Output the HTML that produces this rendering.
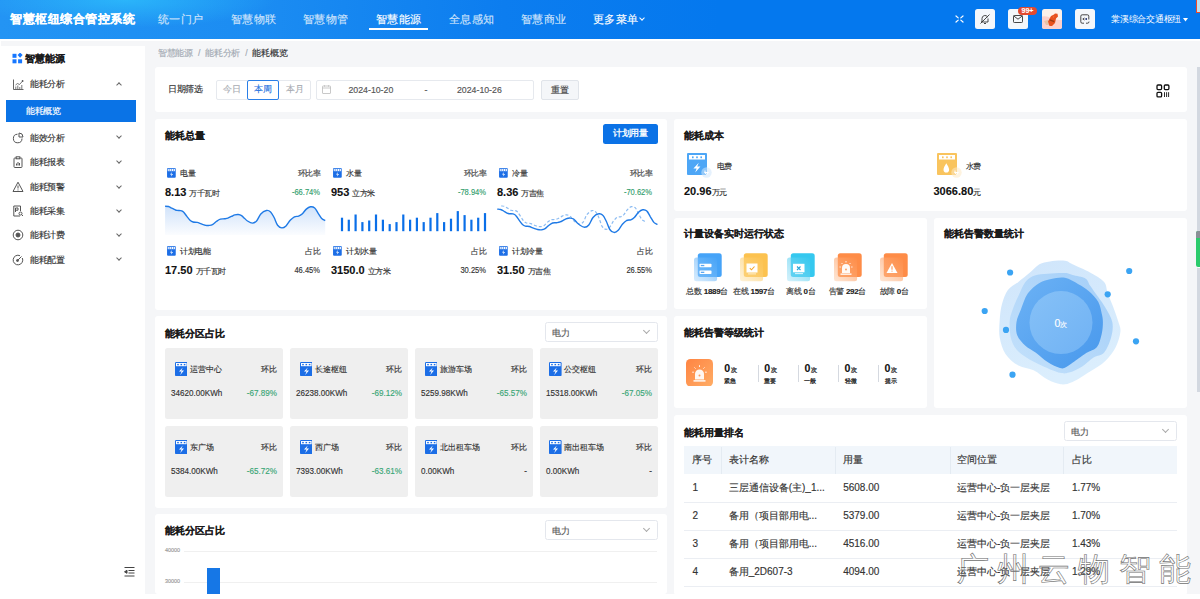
<!DOCTYPE html>
<html><head><meta charset="utf-8">
<style>
*{margin:0;padding:0;box-sizing:border-box}
html,body{width:1200px;height:599px;overflow:hidden;background:#fff;font-family:"Liberation Sans",sans-serif;color:#222}
.a{position:absolute}
.hd{left:0;top:0;width:1200px;height:39px;background:radial-gradient(ellipse 150px 28px at 125px 0px,rgba(50,205,255,0.6),rgba(50,205,255,0) 100%),linear-gradient(90deg,#2394f4 0%,#1b8cf2 22%,#0c7def 42%,#0478ee 60%,#0478ee 100%)}
.title{left:10px;top:10px;font-size:12.45px;letter-spacing:0.5px;font-weight:bold;color:#fff;white-space:nowrap;line-height:18px}
.nav{top:10px;font-size:11.3px;letter-spacing:0.3px;color:#cfe3fb;white-space:nowrap;line-height:18px}
.nav.on{color:#fff}
.card{background:#fff;border-radius:3px}
.ct{font-size:10.6px;font-weight:bold;color:#1a1a1a;white-space:nowrap;line-height:14px}
.side{left:0;top:46px;width:145px;height:548px;background:#fff}
.mi{left:30px;font-size:8.75px;letter-spacing:-0.4px;color:#333;white-space:nowrap;line-height:12px}
.chev{left:116px;width:6px;height:6px;border-right:1px solid #666;border-bottom:1px solid #666;transform:rotate(45deg)}
.t9{font-size:9px;white-space:nowrap;line-height:12px}
.t75{font-size:7.5px;letter-spacing:-0.5px;white-space:nowrap;line-height:11px;color:#333}
.val{font-size:11px;font-weight:bold;color:#111;white-space:nowrap;line-height:14px}
.val span{letter-spacing:-0.5px;font-size:7.5px;font-weight:normal;color:#333}
body *{-webkit-text-stroke:0.15px currentColor}
b,.title,.ct,.val,[style*="font-weight:bold"]{-webkit-text-stroke:0.1px currentColor}
</style></head><body>
<div class="a" style="left:1px;top:41px;width:1199px;height:552.5px;background:#f5f6f8"></div>
<!-- header -->
<div class="a hd"></div>
<div class="a title">智慧枢纽综合管控系统</div>
<div class="a nav" style="left:158px">统一门户</div>
<div class="a nav" style="left:231px">智慧物联</div>
<div class="a nav" style="left:303px">智慧物管</div>
<div class="a nav on" style="left:376px">智慧能源</div>
<div class="a" style="left:369px;top:28px;width:59px;height:1.5px;background:#fff"></div>
<div class="a nav" style="left:449px">全息感知</div>
<div class="a nav" style="left:521px">智慧商业</div>

<!-- sidebar -->
<div class="a side"></div>
<svg class="a" style="left:12px;top:53px" width="11" height="11" viewBox="0 0 11 11"><rect x="0.5" y="0.8" width="4" height="4" fill="#1677ff"/><rect x="6.3" y="0.3" width="3.6" height="3.6" fill="#1677ff" transform="rotate(45 8.1 2.1)"/><rect x="0.5" y="6.3" width="4" height="4" fill="#1677ff"/><rect x="6.1" y="6.3" width="4" height="4" fill="#1677ff"/></svg>
<div class="a" style="left:25px;top:53px;font-size:10px;font-weight:bold;color:#1a1a1a;line-height:12px;white-space:nowrap">智慧能源</div>
<!-- menu icons -->
<svg class="a" style="left:12.5px;top:78.5px" width="11" height="11" viewBox="0 0 11 11" fill="none" stroke="#555" stroke-width="0.9"><path d="M0.5 0.5v10h10"/><path d="M2.8 10V7.5M4.8 10V6.5M6.8 10V8M8.8 10V6" stroke-width="0.8"/><path d="M2.5 6 4.5 4.5 6.5 5.5 9.5 2.2" stroke-width="0.8"/><circle cx="9.6" cy="2" r="0.9" fill="#555" stroke="none"/></svg>
<div class="a mi" style="top:78px">能耗分析</div>
<div class="a" style="left:117.3px;top:82.8px;width:4px;height:4px;border-left:1px solid #666;border-top:1px solid #666;transform:rotate(45deg)"></div>
<div class="a" style="left:6px;top:100px;width:130px;height:22px;background:#0a73e6"></div>
<div class="a mi" style="left:26px;top:105px;color:#fff">能耗概览</div>
<svg class="a" style="left:12px;top:132px" width="12" height="12" viewBox="0 0 12 12" fill="none" stroke="#555" stroke-width="1"><path d="M5.5 2.2A4.3 4.3 0 1 0 10 6.5"/><path d="M7 1v4h4A4 4 0 0 0 7 1z"/></svg>
<div class="a mi" style="top:132px">能效分析</div>
<svg class="a" style="left:12px;top:156px" width="12" height="12" viewBox="0 0 12 12" fill="none" stroke="#555" stroke-width="1"><rect x="2" y="2" width="8" height="9.5" rx="0.8"/><rect x="4.2" y="0.8" width="3.6" height="2" fill="#fff"/><path d="M4.5 9.5V7.5M6 9.5V6M7.5 9.5V7"/></svg>
<div class="a mi" style="top:156px">能耗报表</div>
<svg class="a" style="left:12px;top:181px" width="12" height="12" viewBox="0 0 12 12" fill="none" stroke="#555" stroke-width="1"><path d="M6 1.2 11 10.5H1z"/><path d="M6 4.5v3M6 8.5v0.9"/></svg>
<div class="a mi" style="top:181px">能耗预警</div>
<svg class="a" style="left:12px;top:205px" width="12" height="12" viewBox="0 0 12 12" fill="none" stroke="#555" stroke-width="1"><path d="M8 11H1.8V1h6.7v5"/><path d="M3.5 7V3h2.5v2.2H3.5"/><circle cx="8.5" cy="8.5" r="1.5"/><path d="M9.6 9.6 11 11"/></svg>
<div class="a mi" style="top:205px">能耗采集</div>
<svg class="a" style="left:12px;top:229px" width="12" height="12" viewBox="0 0 12 12" fill="none" stroke="#555" stroke-width="1"><circle cx="6" cy="6" r="4.8"/><circle cx="6" cy="6" r="2" fill="#555"/></svg>
<div class="a mi" style="top:229px">能耗计费</div>
<svg class="a" style="left:12px;top:254px" width="12" height="12" viewBox="0 0 12 12" fill="none" stroke="#555" stroke-width="1"><path d="M10.3 4A4.8 4.8 0 1 1 8 1.7"/><path d="M5 7 9.5 2.5"/><circle cx="5.5" cy="6.5" r="1" fill="#555"/></svg>
<div class="a mi" style="top:254px">能耗配置</div>
<div class="a" style="left:117.3px;top:134.3px;width:4px;height:4px;border-right:1px solid #666;border-bottom:1px solid #666;transform:rotate(45deg)"></div>
<div class="a" style="left:117.3px;top:159.0px;width:4px;height:4px;border-right:1px solid #666;border-bottom:1px solid #666;transform:rotate(45deg)"></div>
<div class="a" style="left:117.3px;top:184.0px;width:4px;height:4px;border-right:1px solid #666;border-bottom:1px solid #666;transform:rotate(45deg)"></div>
<div class="a" style="left:117.3px;top:208.1px;width:4px;height:4px;border-right:1px solid #666;border-bottom:1px solid #666;transform:rotate(45deg)"></div>
<div class="a" style="left:117.3px;top:231.9px;width:4px;height:4px;border-right:1px solid #666;border-bottom:1px solid #666;transform:rotate(45deg)"></div>
<div class="a" style="left:117.3px;top:256.2px;width:4px;height:4px;border-right:1px solid #666;border-bottom:1px solid #666;transform:rotate(45deg)"></div>
<svg class="a" style="left:124px;top:566px" width="11" height="11" viewBox="0 0 11 11" fill="none" stroke="#444" stroke-width="1"><path d="M0.5 1.5h10M4.5 4.5h6M4.5 7h6M0.5 10h10"/><path d="M0.5 5.8 3 4.3v3z" fill="#444"/></svg>

<div class="a nav on" style="left:593px">更多菜单</div>
<div class="a" style="left:640px;top:16px;width:4px;height:4px;border-right:1px solid #fff;border-bottom:1px solid #fff;transform:rotate(45deg)"></div>
<svg class="a" style="left:955px;top:15px" width="9" height="8" viewBox="0 0 9 8" fill="none" stroke="#fff" stroke-width="1.2" stroke-linecap="round"><path d="M1 1 3.2 2.9M8 1 5.8 2.9M1 7 3.2 5.1M8 7 5.8 5.1"/></svg>
<div class="a" style="left:975px;top:9px;width:20px;height:20px;background:#f4f7fb;border-radius:2.5px"></div>
<svg class="a" style="left:979px;top:13px" width="12" height="12" viewBox="0 0 12 12" fill="none" stroke="#333" stroke-width="0.9"><path d="M3 9V5.5A3 3 0 0 1 8.6 4"/><path d="M9 5.5V9H2"/><path d="M5 10.5h2"/><path d="M10.5 1.5 1.5 10.5"/></svg>
<div class="a" style="left:1008px;top:9px;width:20px;height:20px;background:#f4f7fb;border-radius:2.5px"></div>
<svg class="a" style="left:1013px;top:14.5px" width="10" height="8" viewBox="0 0 10 8" fill="none" stroke="#333" stroke-width="0.9"><rect x="0.5" y="0.5" width="9" height="7" rx="0.8"/><path d="M0.8 1 5 4.2 9.2 1"/></svg>
<div class="a" style="left:1018px;top:6.5px;width:19px;height:8px;background:#e24a2f;border-radius:4px;color:#fff;font-size:7px;line-height:8px;text-align:center;font-weight:bold">99+</div>
<div class="a" style="left:1042px;top:9px;width:20px;height:20px;background:#fdf1ea;border-radius:2.5px;overflow:hidden"><svg width="20" height="20" viewBox="0 0 20 20"><path d="M0 7.5 Q5 6.5 9 9 T20 11 V20 H0z" fill="#fdd0cc"/><path d="M2 12 6 11 8 16 4 16z" fill="#e9c3a6"/><path d="M7.5 17 6 12.5 9 7 12 5.5 13 4.5 15.5 4.8 16 7.5 14 9.5 13 14 10 17z" fill="#e8501e"/><path d="M7.5 11.5 12 13.3 12.5 12 8 10.3z" fill="#9a3a12"/><path d="M11 8 12.2 7.2 12 8.6z" fill="#f7a060"/></svg></div>
<div class="a" style="left:1075px;top:9px;width:20px;height:20px;background:#f4f7fb;border-radius:2.5px"></div>
<svg class="a" style="left:1079px;top:13px" width="12" height="12" viewBox="0 0 12 12" fill="none" stroke="#333" stroke-width="0.9"><path d="M9.8 6.5V3.2Q9.8 1.8 8.4 1.8H3.2Q1.8 1.8 1.8 3.2v5.6Q1.8 10.2 3.2 10.2h1.8"/><path d="M7 10.2h1.5Q10 10.2 10 8.6"/><path d="M5.5 5 3.8 6 5.5 7"/><circle cx="7.2" cy="6" r="0.9" fill="#1a2a6c" stroke="none"/></svg>
<div class="a" style="left:1111px;top:12.8px;font-size:8.75px;letter-spacing:-0.25px;line-height:12px;color:#fff;white-space:nowrap;-webkit-text-stroke:0">棠溪综合交通枢纽</div>
<div class="a" style="left:1195.6px;top:-1px;width:6px;height:13.6px;border:1.2px solid #ef4a2c;background:#bfe1f2"></div>
<svg class="a" style="left:1183px;top:17.5px" width="5" height="4" viewBox="0 0 5 4"><path d="M0 0h5L2.5 3.5z" fill="#fff"/></svg>
<div class="a" style="left:158px;top:47.5px;font-size:8.75px;letter-spacing:-0.3px;line-height:11px;color:#a3aab3;white-space:nowrap">智慧能源 <span style="margin:0 3px">/</span> 能耗分析 <span style="margin:0 3px">/</span> <span style="color:#303133">能耗概览</span></div>
<div class="a card" style="left:155px;top:67px;width:1032px;height:45px"></div>
<div class="a" style="left:168px;top:83.5px;font-size:8.75px;letter-spacing:-0.35px;line-height:11px;color:#303133;white-space:nowrap">日期筛选</div>
<div class="a" style="left:216px;top:80px;width:95px;height:20px;border:1px solid #e6e9ee;border-radius:2px"></div>
<div class="a" style="left:247px;top:80px;width:32px;height:20px;border:1px solid #2a7fe8;border-radius:2px;background:#fff"></div>
<div class="a" style="left:216px;top:84px;width:31px;text-align:center;font-size:8.75px;line-height:11px;color:#a8abb2">今日</div>
<div class="a" style="left:247px;top:84px;width:32px;text-align:center;font-size:8.75px;line-height:11px;color:#1f73e0">本周</div>
<div class="a" style="left:279px;top:84px;width:32px;text-align:center;font-size:8.75px;line-height:11px;color:#a8abb2">本月</div>
<div class="a" style="left:316px;top:80px;width:218px;height:20px;border:1px solid #e6e9ee;border-radius:2px"></div>
<svg class="a" style="left:322px;top:85px" width="9" height="9" viewBox="0 0 9 9" fill="none" stroke="#bbb" stroke-width="0.8"><rect x="0.5" y="1" width="8" height="7.5" rx="0.5"/><path d="M0.5 3h8M2.5 0.2v1.5M6.5 0.2v1.5"/></svg>
<div class="a" style="left:348.5px;top:84.5px;font-size:8.75px;line-height:11px;color:#555;white-space:nowrap">2024-10-20</div>
<div class="a" style="left:424.5px;top:84.5px;font-size:8.75px;line-height:11px;color:#555">-</div>
<div class="a" style="left:457px;top:84.5px;font-size:8.75px;line-height:11px;color:#555;white-space:nowrap">2024-10-26</div>
<div class="a" style="left:541px;top:80px;width:38px;height:20px;border:1px solid #e0e4ea;border-radius:2px;background:#f4f6f9;text-align:center;font-size:8.75px;line-height:18px;color:#444">重置</div>
<svg class="a" style="left:1156px;top:84px" width="14" height="14" viewBox="0 0 14 14" fill="none" stroke="#111" stroke-width="1.3"><rect x="1" y="1" width="4.6" height="4.6" rx="1"/><rect x="8.3" y="1" width="4.6" height="4.6" rx="1"/><rect x="1" y="8.3" width="4.6" height="4.6" rx="1"/><path d="M8.5 8.2v4.8M10.6 8.2v4.8M12.6 8.2v4.8" stroke-width="0.9"/></svg>
<div class="a card" style="left:155px;top:118.5px;width:512px;height:191px"></div>
<div class="a card" style="left:674px;top:118.5px;width:513px;height:92.5px"></div>
<div class="a card" style="left:674px;top:217.5px;width:253px;height:91.5px"></div>
<div class="a card" style="left:934px;top:217.5px;width:253px;height:190.5px"></div>
<div class="a card" style="left:674px;top:316px;width:253px;height:92px"></div>
<div class="a card" style="left:155px;top:316px;width:512px;height:191.5px"></div>
<div class="a card" style="left:674px;top:415px;width:513px;height:180px"></div>
<div class="a card" style="left:155px;top:513.5px;width:512px;height:80px"></div>
<div class="a" style="left:0;top:593.5px;width:1200px;height:6px;background:#fff"></div>
<svg class="a" style="left:0;top:0" width="1200" height="599" viewBox="0 0 1200 599">
<defs><linearGradient id="ga" x1="0" y1="0" x2="0" y2="1"><stop offset="0" stop-color="#2b7de9" stop-opacity="0.22"/><stop offset="1" stop-color="#2b7de9" stop-opacity="0.02"/></linearGradient></defs>
<path d="M165.1 206.2 C165.6 206.2 167.4 206.2 168.5 206.5 C169.6 206.8 170.7 207.6 171.9 208.2 C173.2 208.8 174.5 209.8 176.0 210.2 C177.5 210.7 179.6 210.3 180.8 210.6 C182.1 210.9 182.5 211.0 183.5 212.0 C184.5 213.0 185.8 215.0 186.9 216.4 C188.0 217.8 189.3 219.6 190.3 220.5 C191.3 221.4 191.9 221.7 193.1 222.0 C194.2 222.3 195.8 222.1 197.2 222.4 C198.6 222.7 199.9 223.4 201.3 223.9 C202.7 224.4 204.0 224.9 205.4 225.2 C206.8 225.4 208.2 225.5 209.5 225.4 C210.8 225.3 211.8 225.0 212.9 224.3 C214.0 223.7 215.1 222.4 216.3 221.5 C217.6 220.6 219.0 219.5 220.4 219.1 C221.8 218.7 223.2 219.0 224.5 218.8 C225.8 218.6 226.8 218.5 227.9 218.1 C229.1 217.7 230.2 216.9 231.4 216.4 C232.6 215.9 233.7 215.2 234.8 214.9 C235.9 214.6 237.1 214.4 238.2 214.5 C239.3 214.6 240.5 214.9 241.6 215.6 C242.7 216.3 243.7 217.6 244.7 218.5 C245.7 219.4 246.2 220.2 247.5 221.0 C248.8 221.8 250.9 223.1 252.4 223.1 C253.9 223.1 255.2 222.5 256.6 221.0 C258.0 219.5 259.2 215.8 260.8 214.0 C262.4 212.2 264.8 210.8 266.4 210.5 C268.0 210.2 269.3 210.7 270.6 211.9 C271.9 213.1 272.9 215.3 274.1 217.5 C275.3 219.7 276.3 223.5 277.6 225.2 C278.9 226.9 280.4 227.8 281.8 227.9 C283.2 228.0 284.6 227.2 286.0 225.9 C287.4 224.6 288.8 221.8 290.2 220.3 C291.6 218.8 293.0 217.5 294.4 216.8 C295.8 216.1 297.3 216.6 298.6 216.1 C299.9 215.6 300.8 215.2 302.1 214.0 C303.4 212.8 304.9 210.3 306.3 209.1 C307.7 207.9 309.1 207.0 310.5 206.8 C311.9 206.6 313.4 206.9 314.7 208.0 C316.0 209.1 317.0 211.6 318.2 213.3 C319.4 215.1 320.5 217.3 321.7 218.5 C322.9 219.7 324.6 220.2 325.2 220.6 L325.2 235 L165.05 235 Z" fill="url(#ga)"/>
<path d="M165.1 206.2 C165.6 206.2 167.4 206.2 168.5 206.5 C169.6 206.8 170.7 207.6 171.9 208.2 C173.2 208.8 174.5 209.8 176.0 210.2 C177.5 210.7 179.6 210.3 180.8 210.6 C182.1 210.9 182.5 211.0 183.5 212.0 C184.5 213.0 185.8 215.0 186.9 216.4 C188.0 217.8 189.3 219.6 190.3 220.5 C191.3 221.4 191.9 221.7 193.1 222.0 C194.2 222.3 195.8 222.1 197.2 222.4 C198.6 222.7 199.9 223.4 201.3 223.9 C202.7 224.4 204.0 224.9 205.4 225.2 C206.8 225.4 208.2 225.5 209.5 225.4 C210.8 225.3 211.8 225.0 212.9 224.3 C214.0 223.7 215.1 222.4 216.3 221.5 C217.6 220.6 219.0 219.5 220.4 219.1 C221.8 218.7 223.2 219.0 224.5 218.8 C225.8 218.6 226.8 218.5 227.9 218.1 C229.1 217.7 230.2 216.9 231.4 216.4 C232.6 215.9 233.7 215.2 234.8 214.9 C235.9 214.6 237.1 214.4 238.2 214.5 C239.3 214.6 240.5 214.9 241.6 215.6 C242.7 216.3 243.7 217.6 244.7 218.5 C245.7 219.4 246.2 220.2 247.5 221.0 C248.8 221.8 250.9 223.1 252.4 223.1 C253.9 223.1 255.2 222.5 256.6 221.0 C258.0 219.5 259.2 215.8 260.8 214.0 C262.4 212.2 264.8 210.8 266.4 210.5 C268.0 210.2 269.3 210.7 270.6 211.9 C271.9 213.1 272.9 215.3 274.1 217.5 C275.3 219.7 276.3 223.5 277.6 225.2 C278.9 226.9 280.4 227.8 281.8 227.9 C283.2 228.0 284.6 227.2 286.0 225.9 C287.4 224.6 288.8 221.8 290.2 220.3 C291.6 218.8 293.0 217.5 294.4 216.8 C295.8 216.1 297.3 216.6 298.6 216.1 C299.9 215.6 300.8 215.2 302.1 214.0 C303.4 212.8 304.9 210.3 306.3 209.1 C307.7 207.9 309.1 207.0 310.5 206.8 C311.9 206.6 313.4 206.9 314.7 208.0 C316.0 209.1 317.0 211.6 318.2 213.3 C319.4 215.1 320.5 217.3 321.7 218.5 C322.9 219.7 324.6 220.2 325.2 220.6" fill="none" stroke="#1f7ae6" stroke-width="1.4"/>
<rect x="340.9" y="217.7" width="2.2" height="13.5" fill="#0a6fe8"/><rect x="347.7" y="219.7" width="2.2" height="11.5" fill="#0a6fe8"/><rect x="354.5" y="214.5" width="2.2" height="16.7" fill="#0a6fe8"/><rect x="361.3" y="222.1" width="2.2" height="9.1" fill="#0a6fe8"/><rect x="368.1" y="220.5" width="2.2" height="10.7" fill="#0a6fe8"/><rect x="374.9" y="214.5" width="2.2" height="16.7" fill="#0a6fe8"/><rect x="381.8" y="219.7" width="2.2" height="11.5" fill="#0a6fe8"/><rect x="388.6" y="224.1" width="2.2" height="7.1" fill="#0a6fe8"/><rect x="395.4" y="222.1" width="2.2" height="9.1" fill="#0a6fe8"/><rect x="402.2" y="214.5" width="2.2" height="16.7" fill="#0a6fe8"/><rect x="409.0" y="219.7" width="2.2" height="11.5" fill="#0a6fe8"/><rect x="415.8" y="217.7" width="2.2" height="13.5" fill="#0a6fe8"/><rect x="422.6" y="222.1" width="2.2" height="9.1" fill="#0a6fe8"/><rect x="429.4" y="217.7" width="2.2" height="13.5" fill="#0a6fe8"/><rect x="436.2" y="213.1" width="2.2" height="18.1" fill="#0a6fe8"/><rect x="443.0" y="222.1" width="2.2" height="9.1" fill="#0a6fe8"/><rect x="449.9" y="218.7" width="2.2" height="12.5" fill="#0a6fe8"/><rect x="456.7" y="211.1" width="2.2" height="20.1" fill="#0a6fe8"/><rect x="463.5" y="215.1" width="2.2" height="16.1" fill="#0a6fe8"/><rect x="470.3" y="219.7" width="2.2" height="11.5" fill="#0a6fe8"/><rect x="477.1" y="217.7" width="2.2" height="13.5" fill="#0a6fe8"/><rect x="483.9" y="213.1" width="2.2" height="18.1" fill="#0a6fe8"/>
<path d="M501.3 205.9 C501.8 206.0 503.4 206.0 504.4 206.3 C505.4 206.7 506.3 207.5 507.4 208.1 C508.6 208.8 509.8 209.9 511.1 210.3 C512.4 210.8 514.3 210.4 515.4 210.7 C516.5 211.0 516.9 211.2 517.8 212.2 C518.7 213.3 519.9 215.4 520.9 216.9 C521.9 218.5 523.0 220.3 523.9 221.3 C524.8 222.3 525.4 222.6 526.4 223.0 C527.5 223.3 528.9 223.0 530.1 223.4 C531.3 223.7 532.6 224.5 533.8 225.0 C535.0 225.5 536.2 226.1 537.5 226.3 C538.7 226.6 540.0 226.8 541.1 226.6 C542.2 226.5 543.2 226.1 544.2 225.4 C545.2 224.7 546.1 223.4 547.2 222.4 C548.3 221.5 549.7 220.3 550.9 219.8 C552.1 219.4 553.4 219.7 554.6 219.5 C555.7 219.3 556.6 219.2 557.6 218.8 C558.6 218.3 559.7 217.5 560.7 216.9 C561.8 216.4 562.8 215.7 563.8 215.3 C564.8 215.0 565.8 214.8 566.8 214.9 C567.9 215.0 568.9 215.4 569.9 216.1 C570.9 216.8 571.8 218.2 572.7 219.2 C573.5 220.2 574.0 221.1 575.2 221.9 C576.3 222.7 578.2 224.1 579.6 224.1 C580.9 224.1 582.1 223.5 583.3 221.9 C584.6 220.3 585.6 216.3 587.1 214.4 C588.6 212.5 590.6 211.0 592.1 210.6 C593.6 210.2 594.7 210.9 595.9 212.1 C597.0 213.4 598.0 215.8 599.0 218.1 C600.1 220.5 601.0 224.5 602.1 226.4 C603.3 228.3 604.7 229.2 605.9 229.3 C607.2 229.4 608.4 228.5 609.7 227.1 C610.9 225.8 612.2 222.8 613.4 221.1 C614.7 219.5 615.9 218.1 617.2 217.4 C618.5 216.6 619.8 217.1 621.0 216.6 C622.1 216.1 622.9 215.6 624.1 214.4 C625.2 213.1 626.6 210.4 627.9 209.1 C629.1 207.8 630.4 206.8 631.6 206.6 C632.9 206.5 634.2 206.8 635.4 207.9 C636.5 209.1 637.5 211.7 638.5 213.6 C639.6 215.5 640.6 217.9 641.7 219.2 C642.7 220.5 644.3 221.1 644.8 221.5" fill="none" stroke="#8cbcf2" stroke-width="1.2" stroke-dasharray="3 2"/>
<path d="M497.2 209.1 C497.8 209.2 499.6 209.1 500.7 209.5 C501.8 209.8 502.9 210.6 504.1 211.3 C505.4 212.0 506.7 213.1 508.2 213.5 C509.7 213.9 511.8 213.6 513.0 213.9 C514.2 214.2 514.7 214.3 515.7 215.4 C516.7 216.4 518.0 218.6 519.1 220.1 C520.2 221.6 521.5 223.5 522.5 224.5 C523.5 225.5 524.1 225.8 525.3 226.1 C526.4 226.4 528.0 226.2 529.4 226.5 C530.8 226.9 532.1 227.7 533.5 228.1 C534.9 228.6 536.2 229.2 537.6 229.5 C539.0 229.8 540.5 229.9 541.7 229.8 C543.0 229.6 544.0 229.3 545.1 228.6 C546.2 227.9 547.2 226.5 548.5 225.6 C549.8 224.6 551.2 223.5 552.6 223.0 C554.0 222.5 555.5 222.9 556.7 222.7 C558.0 222.5 559.0 222.4 560.1 221.9 C561.2 221.5 562.5 220.7 563.6 220.1 C564.8 219.5 565.9 218.8 567.0 218.5 C568.1 218.1 569.3 217.9 570.4 218.1 C571.5 218.2 572.7 218.5 573.8 219.2 C574.9 220.0 575.9 221.4 576.9 222.4 C577.9 223.3 578.4 224.2 579.7 225.0 C581.0 225.9 583.1 227.3 584.6 227.3 C586.1 227.3 587.4 226.7 588.8 225.0 C590.2 223.4 591.4 219.4 593.0 217.5 C594.6 215.6 597.0 214.1 598.6 213.8 C600.2 213.4 601.5 214.0 602.8 215.3 C604.1 216.5 605.1 218.9 606.3 221.3 C607.5 223.7 608.5 227.7 609.8 229.5 C611.1 231.4 612.6 232.3 614.0 232.4 C615.4 232.6 616.8 231.7 618.2 230.3 C619.6 228.9 621.0 225.9 622.4 224.3 C623.8 222.7 625.2 221.3 626.6 220.5 C628.0 219.8 629.5 220.3 630.8 219.8 C632.1 219.3 633.0 218.8 634.3 217.5 C635.6 216.3 637.1 213.6 638.5 212.3 C639.9 211.0 641.3 210.0 642.7 209.8 C644.1 209.6 645.6 209.9 646.9 211.1 C648.2 212.2 649.2 214.9 650.4 216.8 C651.6 218.6 652.7 221.0 653.9 222.4 C655.1 223.7 656.8 224.2 657.4 224.6" fill="none" stroke="#1f7ae6" stroke-width="1.4"/>
</svg><div class="a ct" style="left:165px;top:128.7px;font-size:10px">能耗总量</div>
<div class="a" style="left:603px;top:124.2px;width:55px;height:19.8px;background:#0b72e6;border-radius:2.5px;color:#fff;font-size:8.75px;letter-spacing:-0.2px;line-height:19.8px;text-align:center;-webkit-text-stroke:0.3px #fff">计划用量</div>
<svg class="a" style="left:167.2px;top:168.2px" width="8.8" height="9.8" viewBox="0 0 12.6 14.2"><rect width="12.6" height="14.2" rx="1.4" fill="#1c6ee6"/><rect x="1" y="1.2" width="10.6" height="3.4" fill="#fff"/><rect x="2.2" y="2.1" width="1.8" height="1.6" fill="#1c6ee6"/><rect x="5.4" y="2.1" width="1.8" height="1.6" fill="#1c6ee6"/><rect x="8.6" y="2.1" width="1.8" height="1.6" fill="#1c6ee6"/><path d="M7.4 5.8 4.2 9.6h2.4l-1.2 3.2 3.3-4H6.3z" fill="#fff"/></svg><div class="a t75" style="left:180px;top:168px">电量</div><div class="a t75" style="left:260px;top:168px;width:60px;text-align:right;color:#444">环比率</div><div class="a val" style="left:165px;top:185px">8.13 <span>万千瓦时</span></div><div class="a t75" style="letter-spacing:0;left:260px;top:186.8px;width:60px;text-align:right;color:#34a06e;font-size:9.1px;transform:scaleX(0.83);transform-origin:100% 0">-66.74%</div><svg class="a" style="left:167.2px;top:246.2px" width="8.8" height="9.8" viewBox="0 0 12.6 14.2"><rect width="12.6" height="14.2" rx="1.4" fill="#1c6ee6"/><rect x="1" y="1.2" width="10.6" height="3.4" fill="#fff"/><rect x="2.2" y="2.1" width="1.8" height="1.6" fill="#1c6ee6"/><rect x="5.4" y="2.1" width="1.8" height="1.6" fill="#1c6ee6"/><rect x="8.6" y="2.1" width="1.8" height="1.6" fill="#1c6ee6"/><path d="M7.4 5.8 4.2 9.6h2.4l-1.2 3.2 3.3-4H6.3z" fill="#fff"/></svg><div class="a t75" style="left:180px;top:246px">计划电能</div><div class="a t75" style="left:260px;top:246px;width:60px;text-align:right;color:#444">占比</div><div class="a val" style="left:165px;top:263px">17.50 <span>万千瓦时</span></div><div class="a t75" style="letter-spacing:0;left:260px;top:264.8px;width:60px;text-align:right;color:#333;font-size:9.1px;transform:scaleX(0.83);transform-origin:100% 0">46.45%</div>
<svg class="a" style="left:333.2px;top:168.2px" width="8.8" height="9.8" viewBox="0 0 12.6 14.2"><rect width="12.6" height="14.2" rx="1.4" fill="#1c6ee6"/><rect x="1" y="1.2" width="10.6" height="3.4" fill="#fff"/><rect x="2.2" y="2.1" width="1.8" height="1.6" fill="#1c6ee6"/><rect x="5.4" y="2.1" width="1.8" height="1.6" fill="#1c6ee6"/><rect x="8.6" y="2.1" width="1.8" height="1.6" fill="#1c6ee6"/><path d="M7.4 5.8 4.2 9.6h2.4l-1.2 3.2 3.3-4H6.3z" fill="#fff"/></svg><div class="a t75" style="left:346px;top:168px">水量</div><div class="a t75" style="left:426px;top:168px;width:60px;text-align:right;color:#444">环比率</div><div class="a val" style="left:331px;top:185px">953 <span>立方米</span></div><div class="a t75" style="letter-spacing:0;left:426px;top:186.8px;width:60px;text-align:right;color:#34a06e;font-size:9.1px;transform:scaleX(0.83);transform-origin:100% 0">-78.94%</div><svg class="a" style="left:333.2px;top:246.2px" width="8.8" height="9.8" viewBox="0 0 12.6 14.2"><rect width="12.6" height="14.2" rx="1.4" fill="#1c6ee6"/><rect x="1" y="1.2" width="10.6" height="3.4" fill="#fff"/><rect x="2.2" y="2.1" width="1.8" height="1.6" fill="#1c6ee6"/><rect x="5.4" y="2.1" width="1.8" height="1.6" fill="#1c6ee6"/><rect x="8.6" y="2.1" width="1.8" height="1.6" fill="#1c6ee6"/><path d="M7.4 5.8 4.2 9.6h2.4l-1.2 3.2 3.3-4H6.3z" fill="#fff"/></svg><div class="a t75" style="left:346px;top:246px">计划水量</div><div class="a t75" style="left:426px;top:246px;width:60px;text-align:right;color:#444">占比</div><div class="a val" style="left:331px;top:263px">3150.0 <span>立方米</span></div><div class="a t75" style="letter-spacing:0;left:426px;top:264.8px;width:60px;text-align:right;color:#333;font-size:9.1px;transform:scaleX(0.83);transform-origin:100% 0">30.25%</div>
<svg class="a" style="left:499.2px;top:168.2px" width="8.8" height="9.8" viewBox="0 0 12.6 14.2"><rect width="12.6" height="14.2" rx="1.4" fill="#1c6ee6"/><rect x="1" y="1.2" width="10.6" height="3.4" fill="#fff"/><rect x="2.2" y="2.1" width="1.8" height="1.6" fill="#1c6ee6"/><rect x="5.4" y="2.1" width="1.8" height="1.6" fill="#1c6ee6"/><rect x="8.6" y="2.1" width="1.8" height="1.6" fill="#1c6ee6"/><path d="M7.4 5.8 4.2 9.6h2.4l-1.2 3.2 3.3-4H6.3z" fill="#fff"/></svg><div class="a t75" style="left:512px;top:168px">冷量</div><div class="a t75" style="left:592px;top:168px;width:60px;text-align:right;color:#444">环比率</div><div class="a val" style="left:497px;top:185px">8.36 <span>万吉焦</span></div><div class="a t75" style="letter-spacing:0;left:592px;top:186.8px;width:60px;text-align:right;color:#34a06e;font-size:9.1px;transform:scaleX(0.83);transform-origin:100% 0">-70.62%</div><svg class="a" style="left:499.2px;top:246.2px" width="8.8" height="9.8" viewBox="0 0 12.6 14.2"><rect width="12.6" height="14.2" rx="1.4" fill="#1c6ee6"/><rect x="1" y="1.2" width="10.6" height="3.4" fill="#fff"/><rect x="2.2" y="2.1" width="1.8" height="1.6" fill="#1c6ee6"/><rect x="5.4" y="2.1" width="1.8" height="1.6" fill="#1c6ee6"/><rect x="8.6" y="2.1" width="1.8" height="1.6" fill="#1c6ee6"/><path d="M7.4 5.8 4.2 9.6h2.4l-1.2 3.2 3.3-4H6.3z" fill="#fff"/></svg><div class="a t75" style="left:512px;top:246px">计划冷量</div><div class="a t75" style="left:592px;top:246px;width:60px;text-align:right;color:#444">占比</div><div class="a val" style="left:497px;top:263px">31.50 <span>万吉焦</span></div><div class="a t75" style="letter-spacing:0;left:592px;top:264.8px;width:60px;text-align:right;color:#333;font-size:9.1px;transform:scaleX(0.83);transform-origin:100% 0">26.55%</div>
<div class="a ct" style="left:684px;top:128.7px;font-size:10px">能耗成本</div><svg class="a" style="left:687.0px;top:152.7px" width="26" height="27" viewBox="0 0 26 27"><rect x="0" y="0" width="20" height="22" rx="1" fill="#4da6f6"/><rect x="2" y="2" width="16" height="4.5" fill="#fff"/><rect x="5" y="3.4" width="1.6" height="1.8" fill="#4da6f6"/><rect x="9.2" y="3.4" width="1.6" height="1.8" fill="#4da6f6"/><rect x="13.4" y="3.4" width="1.6" height="1.8" fill="#4da6f6"/><path d="M11.8 9.8 6.4 15.6h3.2L8.2 19.6l5.2-6.2h-3.2z" fill="#fff"/><circle cx="19.5" cy="19.5" r="5.2" fill="#cfe6fc" opacity="0.55"/><path d="M18 17.5v2.5l2 1.5 1.5-2.5M17.5 19.5h3.5" stroke="#fff" stroke-width="1" fill="none"/></svg><svg class="a" style="left:936.5px;top:153.0px" width="26" height="27" viewBox="0 0 26 27"><rect x="0" y="0" width="20" height="22" rx="1" fill="#f9c45e"/><rect x="2" y="2" width="16" height="4.5" fill="#fff"/><rect x="5" y="3.4" width="1.6" height="1.8" fill="#f9c45e"/><rect x="9.2" y="3.4" width="1.6" height="1.8" fill="#f9c45e"/><rect x="13.4" y="3.4" width="1.6" height="1.8" fill="#f9c45e"/><path d="M9.3 10.3C8 12.6 6.5 14.6 6.5 16.8a2.8 2.8 0 0 0 5.6 0C12.1 14.6 10.6 12.6 9.3 10.3z" fill="#fff"/><circle cx="19.5" cy="19.5" r="5.2" fill="#fde9c4" opacity="0.55"/><path d="M18 17.5v2.5l2 1.5 1.5-2.5M17.5 19.5h3.5" stroke="#fff" stroke-width="1" fill="none"/></svg><div class="a t75" style="left:716.5px;top:160.5px;color:#333">电费</div>
<div class="a val" style="left:684px;top:184px;font-size:11px">20.96<span style="font-size:7.6px;color:#333">万元</span></div>
<div class="a t75" style="left:965.5px;top:160.5px;color:#333">水费</div>
<div class="a val" style="left:933.5px;top:184px;font-size:11px">3066.80<span style="font-size:7.6px;color:#333">元</span></div>
<div class="a ct" style="left:684px;top:227.2px;font-size:10px">计量设备实时运行状态</div><svg class="a" style="left:693.6px;top:253px" width="29" height="29" viewBox="0 0 29 29"><defs><linearGradient id="dg0" x1="0" y1="1" x2="1" y2="0"><stop offset="0" stop-color="#a6d4fb" stop-opacity="0.45"/><stop offset="1" stop-color="#45a3f8" stop-opacity="0.75"/></linearGradient></defs><rect x="3.8" y="0.3" width="23.9" height="23.8" rx="2.5" fill="#45a3f8"/><rect x="0" y="4.4" width="23.1" height="23.9" rx="2.5" fill="url(#dg0)"/><rect x="5.5" y="10.8" width="12" height="3.4" rx="0.8" fill="#fff"/><rect x="5.5" y="17.6" width="12" height="3.4" rx="0.8" fill="#fff"/><rect x="6.8" y="11.9" width="3.5" height="1.3" fill="#5da9f2"/><rect x="6.8" y="18.7" width="3.5" height="1.3" fill="#5da9f2"/></svg><div class="a" style="left:677.3px;top:286px;width:60px;text-align:center;color:#333;font-size:8px;letter-spacing:-0.3px;line-height:11px;white-space:nowrap">总数 <b style="color:#222">1889</b>台</div><svg class="a" style="left:740.2px;top:253px" width="29" height="29" viewBox="0 0 29 29"><defs><linearGradient id="dg1" x1="0" y1="1" x2="1" y2="0"><stop offset="0" stop-color="#fde3a8" stop-opacity="0.45"/><stop offset="1" stop-color="#fcc24f" stop-opacity="0.75"/></linearGradient></defs><rect x="3.8" y="0.3" width="23.9" height="23.8" rx="2.5" fill="#fcc24f"/><rect x="0" y="4.4" width="23.1" height="23.9" rx="2.5" fill="url(#dg1)"/><rect x="6.5" y="10.5" width="11" height="9" fill="#fff"/><path d="M9.8 15.2 11.5 16.8 14.5 13.5" stroke="#f4a52a" stroke-width="1.1" fill="none"/><rect x="8" y="20.5" width="8" height="0.8" fill="#fff" opacity="0.8"/></svg><div class="a" style="left:724.0px;top:286px;width:60px;text-align:center;color:#333;font-size:8px;letter-spacing:-0.3px;line-height:11px;white-space:nowrap">在线 <b style="color:#222">1597</b>台</div><svg class="a" style="left:786.9px;top:253px" width="29" height="29" viewBox="0 0 29 29"><defs><linearGradient id="dg2" x1="0" y1="1" x2="1" y2="0"><stop offset="0" stop-color="#9fe0f6" stop-opacity="0.45"/><stop offset="1" stop-color="#35c8ef" stop-opacity="0.75"/></linearGradient></defs><rect x="3.8" y="0.3" width="23.9" height="23.8" rx="2.5" fill="#35c8ef"/><rect x="0" y="4.4" width="23.1" height="23.9" rx="2.5" fill="url(#dg2)"/><rect x="6" y="10.8" width="11.5" height="8.5" fill="#fff"/><path d="M10 13.5 13.5 17M13.5 13.5 10 17" stroke="#2aa6d8" stroke-width="1.1"/><rect x="8" y="20.3" width="8" height="0.8" fill="#fff"/></svg><div class="a" style="left:770.7px;top:286px;width:60px;text-align:center;color:#333;font-size:8px;letter-spacing:-0.3px;line-height:11px;white-space:nowrap">离线 <b style="color:#222">0</b>台</div><svg class="a" style="left:833.5px;top:253px" width="29" height="29" viewBox="0 0 29 29"><defs><linearGradient id="dg3" x1="0" y1="1" x2="1" y2="0"><stop offset="0" stop-color="#fdc7a0" stop-opacity="0.45"/><stop offset="1" stop-color="#fe8c47" stop-opacity="0.75"/></linearGradient></defs><rect x="3.8" y="0.3" width="23.9" height="23.8" rx="2.5" fill="#fe8c47"/><rect x="0" y="4.4" width="23.1" height="23.9" rx="2.5" fill="url(#dg3)"/><path d="M8 20v-5a4 4 0 0 1 8 0v5z" fill="#fff" opacity="0.95"/><rect x="6.5" y="20.5" width="11" height="1.3" fill="#fff"/><path d="M12 8v1.5M7.5 10l1 1M16.5 10l-1 1M5.5 14h1.3M17.2 14h1.3" stroke="#fff" stroke-width="0.9"/><circle cx="12" cy="16.5" r="0.9" fill="#fd9a5c"/></svg><div class="a" style="left:817.4px;top:286px;width:60px;text-align:center;color:#333;font-size:8px;letter-spacing:-0.3px;line-height:11px;white-space:nowrap">告警 <b style="color:#222">292</b>台</div><svg class="a" style="left:880.2px;top:253px" width="29" height="29" viewBox="0 0 29 29"><defs><linearGradient id="dg4" x1="0" y1="1" x2="1" y2="0"><stop offset="0" stop-color="#fdc7a0" stop-opacity="0.45"/><stop offset="1" stop-color="#fe8c47" stop-opacity="0.75"/></linearGradient></defs><rect x="3.8" y="0.3" width="23.9" height="23.8" rx="2.5" fill="#fe8c47"/><rect x="0" y="4.4" width="23.1" height="23.9" rx="2.5" fill="url(#dg4)"/><path d="M12 10 17.5 20H6.5z" fill="#fff"/><path d="M12 13.2v3.5M12 17.7v0.9" stroke="#fd8a45" stroke-width="1"/></svg><div class="a" style="left:864.1px;top:286px;width:60px;text-align:center;color:#333;font-size:8px;letter-spacing:-0.3px;line-height:11px;white-space:nowrap">故障 <b style="color:#222">0</b>台</div><div class="a ct" style="left:684px;top:326.2px;font-size:10px">能耗告警等级统计</div>
<svg class="a" style="left:686px;top:358.8px" width="27" height="27.5" viewBox="0 0 27 27.5"><defs><linearGradient id="og" x1="0" y1="0" x2="1" y2="1"><stop offset="0" stop-color="#ff8442"/><stop offset="1" stop-color="#ffad66"/></linearGradient></defs><rect width="27" height="27.5" rx="4.5" fill="url(#og)"/>
<path d="M9 20.5v-5.5a4.5 4.5 0 0 1 9 0v5.5z" fill="#fff" opacity="0.92"/><rect x="7.5" y="21.2" width="12" height="1.4" fill="#fff"/><path d="M13.5 6.3v1.6M8.5 8.5l1 1M18.5 8.5l-1 1M6.3 13.2h1.5M19.2 13.2h1.5" stroke="#fff" stroke-width="1"/><circle cx="13.5" cy="16.5" r="1" fill="#ff9a5a"/></svg>
<div class="a" style="left:724.2px;top:361.5px;font-size:10.6px;line-height:13px;color:#111;white-space:nowrap;font-weight:bold">0<span style="font-size:6px;color:#555;margin-left:0.5px">次</span></div><div class="a" style="left:724.2px;top:376.5px;font-size:5.8px;line-height:8px;color:#222;white-space:nowrap;-webkit-text-stroke:0.25px #222">紧急</div><div class="a" style="left:757.8px;top:365px;width:1px;height:17px;background:#d5d9e0"></div><div class="a" style="left:764.3px;top:361.5px;font-size:10.6px;line-height:13px;color:#111;white-space:nowrap;font-weight:bold">0<span style="font-size:6px;color:#555;margin-left:0.5px">次</span></div><div class="a" style="left:764.3px;top:376.5px;font-size:5.8px;line-height:8px;color:#222;white-space:nowrap;-webkit-text-stroke:0.25px #222">重要</div><div class="a" style="left:797.9px;top:365px;width:1px;height:17px;background:#d5d9e0"></div><div class="a" style="left:804.4px;top:361.5px;font-size:10.6px;line-height:13px;color:#111;white-space:nowrap;font-weight:bold">0<span style="font-size:6px;color:#555;margin-left:0.5px">次</span></div><div class="a" style="left:804.4px;top:376.5px;font-size:5.8px;line-height:8px;color:#222;white-space:nowrap;-webkit-text-stroke:0.25px #222">一般</div><div class="a" style="left:838.0px;top:365px;width:1px;height:17px;background:#d5d9e0"></div><div class="a" style="left:844.5px;top:361.5px;font-size:10.6px;line-height:13px;color:#111;white-space:nowrap;font-weight:bold">0<span style="font-size:6px;color:#555;margin-left:0.5px">次</span></div><div class="a" style="left:844.5px;top:376.5px;font-size:5.8px;line-height:8px;color:#222;white-space:nowrap;-webkit-text-stroke:0.25px #222">轻微</div><div class="a" style="left:878.1px;top:365px;width:1px;height:17px;background:#d5d9e0"></div><div class="a" style="left:884.6px;top:361.5px;font-size:10.6px;line-height:13px;color:#111;white-space:nowrap;font-weight:bold">0<span style="font-size:6px;color:#555;margin-left:0.5px">次</span></div><div class="a" style="left:884.6px;top:376.5px;font-size:5.8px;line-height:8px;color:#222;white-space:nowrap;-webkit-text-stroke:0.25px #222">提示</div><div class="a ct" style="left:944px;top:227.2px;font-size:10px">能耗告警数量统计</div><svg class="a" style="left:934px;top:217px" width="253" height="191" viewBox="934 217 253 191">
<defs>
<linearGradient id="bgA" x1="0" y1="0" x2="0.3" y2="1"><stop offset="0" stop-color="#cfe5fb"/><stop offset="1" stop-color="#dbeefd"/></linearGradient><linearGradient id="bgB" x1="1" y1="0" x2="0" y2="1"><stop offset="0" stop-color="#a3cef8"/><stop offset="1" stop-color="#c4e1fb"/></linearGradient>
<linearGradient id="bg3" x1="0" y1="0" x2="1" y2="1"><stop offset="0" stop-color="#6cb2f5"/><stop offset="1" stop-color="#4898ec"/></linearGradient>
<linearGradient id="bg4" x1="0" y1="0" x2="1" y2="1"><stop offset="0" stop-color="#86c1f7"/><stop offset="1" stop-color="#70b2f4"/></linearGradient>
</defs>
<path d="M1065.0 260.8 C1068.8 261.3 1068.3 262.4 1072.5 264.3 C1076.7 266.2 1084.7 269.6 1090.0 272.5 C1095.3 275.4 1101.2 278.6 1104.1 281.9 C1107.0 285.2 1106.0 288.1 1107.6 292.4 C1109.1 296.7 1111.6 302.7 1113.4 307.6 C1115.2 312.5 1117.2 318.0 1118.4 322.0 C1119.6 326.0 1120.8 327.6 1120.4 331.7 C1120.0 335.8 1118.3 342.0 1115.8 346.9 C1113.3 351.8 1109.6 356.8 1105.3 360.9 C1101.0 365.0 1095.6 367.9 1090.1 371.4 C1084.6 374.9 1077.4 379.8 1072.5 381.9 C1067.6 384.0 1065.0 384.7 1060.8 384.3 C1056.6 383.9 1052.1 381.9 1047.6 379.6 C1043.1 377.3 1038.5 372.6 1033.6 370.3 C1028.7 368.0 1023.1 368.3 1018.4 365.6 C1013.7 362.9 1008.6 358.6 1005.5 353.9 C1002.4 349.2 1000.7 343.1 999.7 337.5 C998.7 331.9 999.3 325.6 999.7 320.0 C1000.1 314.4 1000.6 309.0 1002.0 304.0 C1003.4 299.0 1005.2 293.7 1007.9 290.0 C1010.6 286.3 1014.7 284.8 1018.4 281.9 C1022.1 279.0 1026.5 275.4 1030.0 272.5 C1033.5 269.6 1036.1 266.2 1039.4 264.3 C1042.7 262.4 1045.6 262.0 1049.9 261.4 C1054.2 260.8 1061.2 260.3 1065.0 260.8Z" fill="url(#bgA)"/>
<path d="M1065.0 273.1 C1069.2 273.3 1069.1 274.0 1072.5 274.9 C1075.9 275.8 1082.5 276.6 1085.4 278.4 C1088.3 280.1 1087.9 282.3 1090.0 285.4 C1092.1 288.5 1095.7 293.4 1098.2 297.1 C1100.8 300.8 1103.0 303.5 1105.3 307.6 C1107.6 311.8 1111.3 317.0 1112.3 322.0 C1113.3 327.0 1112.5 332.4 1111.1 337.5 C1109.7 342.6 1106.9 349.4 1104.0 352.7 C1101.1 356.0 1097.3 355.1 1093.6 357.4 C1089.9 359.7 1086.0 364.2 1081.9 366.7 C1077.8 369.2 1072.7 371.6 1069.0 372.6 C1065.3 373.6 1064.2 373.8 1060.0 372.8 C1055.8 371.8 1049.1 368.9 1044.1 366.7 C1039.1 364.5 1034.3 362.2 1030.0 359.7 C1025.7 357.2 1021.5 354.9 1018.4 351.6 C1015.3 348.3 1012.9 344.8 1011.4 339.9 C1009.9 335.0 1009.4 327.0 1009.6 322.0 C1009.8 317.0 1011.0 314.3 1012.5 310.0 C1014.0 305.7 1016.2 300.7 1018.4 296.0 C1020.5 291.3 1022.7 285.3 1025.4 281.9 C1028.1 278.5 1031.0 276.9 1034.7 275.5 C1038.4 274.1 1042.5 274.1 1047.6 273.7 C1052.6 273.3 1060.8 272.9 1065.0 273.1Z" fill="url(#bgB)"/>
<path d="M1065.0 277.8 C1069.5 278.7 1074.4 282.0 1078.4 284.2 C1082.4 286.4 1085.6 288.3 1088.9 291.2 C1092.2 294.1 1096.1 298.0 1098.2 301.7 C1100.3 305.4 1100.9 310.0 1101.7 313.4 C1102.5 316.8 1102.9 318.6 1102.9 322.0 C1102.9 325.4 1102.7 329.9 1101.7 334.0 C1100.7 338.1 1099.5 343.8 1097.0 346.9 C1094.5 350.0 1089.7 350.8 1086.6 352.7 C1083.5 354.6 1081.7 356.3 1078.4 358.6 C1075.1 360.9 1069.8 365.1 1066.7 366.7 C1063.6 368.3 1063.2 368.8 1060.0 368.0 C1056.8 367.2 1051.6 364.7 1047.6 362.1 C1043.6 359.6 1039.6 355.4 1035.9 352.7 C1032.2 350.0 1028.5 348.6 1025.4 345.7 C1022.3 342.8 1018.7 339.1 1017.2 335.2 C1015.7 331.2 1015.9 326.2 1016.5 322.0 C1017.1 317.8 1018.8 314.7 1020.7 310.0 C1022.6 305.3 1024.6 298.1 1027.7 293.6 C1030.8 289.1 1035.5 285.4 1039.4 283.0 C1043.3 280.6 1046.8 279.9 1051.1 279.0 C1055.4 278.1 1060.5 276.9 1065.0 277.8Z" fill="url(#bg3)"/>
<circle cx="1061" cy="322.6" r="31.5" fill="url(#bg4)"/>
<circle cx="1010.1" cy="272.5" r="3.1" fill="#3ba4f3"/><circle cx="1129.2" cy="271" r="3.1" fill="#3ba4f3"/><circle cx="1107.7" cy="294.3" r="3.1" fill="#3ba4f3"/><circle cx="984.7" cy="311" r="3.1" fill="#3ba4f3"/><circle cx="1006" cy="329.9" r="3.1" fill="#3ba4f3"/><circle cx="1136" cy="341.3" r="3.1" fill="#3ba4f3"/><circle cx="1012.5" cy="374.7" r="3.1" fill="#3ba4f3"/>
</svg><div class="a" style="left:1031px;top:316px;width:60px;text-align:center;font-size:10.5px;line-height:14px;color:#fff;white-space:nowrap">0<span style="font-size:7px">次</span></div><div class="a ct" style="left:165px;top:326.7px;font-size:10px">能耗分区占比</div><div class="a" style="left:545.2px;top:322.0px;width:113.0px;height:20px;border:1px solid #e4e7ed;border-radius:2.5px;background:#fff"></div><div class="a" style="left:552.2px;top:328.0px;font-size:8.75px;line-height:11px;color:#555">电力</div><div class="a" style="left:643.7px;top:328.3px;width:5px;height:5px;border-right:1px solid #aaa;border-bottom:1px solid #aaa;transform:rotate(45deg)"></div><div class="a" style="left:165.3px;top:347.8px;width:118px;height:71px;background:#efefef;border-radius:2.5px"></div><svg class="a" style="left:174.7px;top:361.8px" width="12.6" height="14.2" viewBox="0 0 12.6 14.2"><rect width="12.6" height="14.2" rx="1.2" fill="#1c6ee6"/><rect x="1" y="1" width="10.6" height="3.2" fill="#fff"/><rect x="2.2" y="1.9" width="1.6" height="1.4" fill="#1c6ee6"/><rect x="5.5" y="1.9" width="1.6" height="1.4" fill="#1c6ee6"/><rect x="8.8" y="1.9" width="1.6" height="1.4" fill="#1c6ee6"/><path d="M7.8 5.4 4 9.6h2.6l-1.4 3.4 3.8-4.4H6.3z" fill="#fff"/></svg><div class="a" style="left:189.7px;top:363.8px;font-size:8.1px;line-height:11px;color:#333;white-space:nowrap">运营中心</div><div class="a" style="left:237.3px;top:363.8px;width:40px;text-align:right;font-size:8.1px;line-height:11px;color:#333;white-space:nowrap">环比</div><div class="a" style="left:170.8px;top:387.6px;font-size:9.3px;line-height:11px;color:#333;white-space:nowrap;transform:scaleX(0.87);transform-origin:0 0">34620.00KWh</div><div class="a" style="left:227.3px;top:387.6px;width:50px;text-align:right;font-size:9.3px;line-height:11px;color:#3aa676;white-space:nowrap;transform:scaleX(0.87);transform-origin:100% 0">-67.89%</div><div class="a" style="left:290.2px;top:347.8px;width:118px;height:71px;background:#efefef;border-radius:2.5px"></div><svg class="a" style="left:299.6px;top:361.8px" width="12.6" height="14.2" viewBox="0 0 12.6 14.2"><rect width="12.6" height="14.2" rx="1.2" fill="#1c6ee6"/><rect x="1" y="1" width="10.6" height="3.2" fill="#fff"/><rect x="2.2" y="1.9" width="1.6" height="1.4" fill="#1c6ee6"/><rect x="5.5" y="1.9" width="1.6" height="1.4" fill="#1c6ee6"/><rect x="8.8" y="1.9" width="1.6" height="1.4" fill="#1c6ee6"/><path d="M7.8 5.4 4 9.6h2.6l-1.4 3.4 3.8-4.4H6.3z" fill="#fff"/></svg><div class="a" style="left:314.6px;top:363.8px;font-size:8.1px;line-height:11px;color:#333;white-space:nowrap">长途枢纽</div><div class="a" style="left:362.2px;top:363.8px;width:40px;text-align:right;font-size:8.1px;line-height:11px;color:#333;white-space:nowrap">环比</div><div class="a" style="left:295.7px;top:387.6px;font-size:9.3px;line-height:11px;color:#333;white-space:nowrap;transform:scaleX(0.87);transform-origin:0 0">26238.00KWh</div><div class="a" style="left:352.2px;top:387.6px;width:50px;text-align:right;font-size:9.3px;line-height:11px;color:#3aa676;white-space:nowrap;transform:scaleX(0.87);transform-origin:100% 0">-69.12%</div><div class="a" style="left:415.1px;top:347.8px;width:118px;height:71px;background:#efefef;border-radius:2.5px"></div><svg class="a" style="left:424.5px;top:361.8px" width="12.6" height="14.2" viewBox="0 0 12.6 14.2"><rect width="12.6" height="14.2" rx="1.2" fill="#1c6ee6"/><rect x="1" y="1" width="10.6" height="3.2" fill="#fff"/><rect x="2.2" y="1.9" width="1.6" height="1.4" fill="#1c6ee6"/><rect x="5.5" y="1.9" width="1.6" height="1.4" fill="#1c6ee6"/><rect x="8.8" y="1.9" width="1.6" height="1.4" fill="#1c6ee6"/><path d="M7.8 5.4 4 9.6h2.6l-1.4 3.4 3.8-4.4H6.3z" fill="#fff"/></svg><div class="a" style="left:439.5px;top:363.8px;font-size:8.1px;line-height:11px;color:#333;white-space:nowrap">旅游车场</div><div class="a" style="left:487.1px;top:363.8px;width:40px;text-align:right;font-size:8.1px;line-height:11px;color:#333;white-space:nowrap">环比</div><div class="a" style="left:420.6px;top:387.6px;font-size:9.3px;line-height:11px;color:#333;white-space:nowrap;transform:scaleX(0.87);transform-origin:0 0">5259.98KWh</div><div class="a" style="left:477.1px;top:387.6px;width:50px;text-align:right;font-size:9.3px;line-height:11px;color:#3aa676;white-space:nowrap;transform:scaleX(0.87);transform-origin:100% 0">-65.57%</div><div class="a" style="left:540.0px;top:347.8px;width:118px;height:71px;background:#efefef;border-radius:2.5px"></div><svg class="a" style="left:549.4px;top:361.8px" width="12.6" height="14.2" viewBox="0 0 12.6 14.2"><rect width="12.6" height="14.2" rx="1.2" fill="#1c6ee6"/><rect x="1" y="1" width="10.6" height="3.2" fill="#fff"/><rect x="2.2" y="1.9" width="1.6" height="1.4" fill="#1c6ee6"/><rect x="5.5" y="1.9" width="1.6" height="1.4" fill="#1c6ee6"/><rect x="8.8" y="1.9" width="1.6" height="1.4" fill="#1c6ee6"/><path d="M7.8 5.4 4 9.6h2.6l-1.4 3.4 3.8-4.4H6.3z" fill="#fff"/></svg><div class="a" style="left:564.4px;top:363.8px;font-size:8.1px;line-height:11px;color:#333;white-space:nowrap">公交枢纽</div><div class="a" style="left:612.0px;top:363.8px;width:40px;text-align:right;font-size:8.1px;line-height:11px;color:#333;white-space:nowrap">环比</div><div class="a" style="left:545.5px;top:387.6px;font-size:9.3px;line-height:11px;color:#333;white-space:nowrap;transform:scaleX(0.87);transform-origin:0 0">15318.00KWh</div><div class="a" style="left:602.0px;top:387.6px;width:50px;text-align:right;font-size:9.3px;line-height:11px;color:#3aa676;white-space:nowrap;transform:scaleX(0.87);transform-origin:100% 0">-67.05%</div><div class="a" style="left:165.3px;top:426.0px;width:118px;height:71px;background:#efefef;border-radius:2.5px"></div><svg class="a" style="left:174.7px;top:440.0px" width="12.6" height="14.2" viewBox="0 0 12.6 14.2"><rect width="12.6" height="14.2" rx="1.2" fill="#1c6ee6"/><rect x="1" y="1" width="10.6" height="3.2" fill="#fff"/><rect x="2.2" y="1.9" width="1.6" height="1.4" fill="#1c6ee6"/><rect x="5.5" y="1.9" width="1.6" height="1.4" fill="#1c6ee6"/><rect x="8.8" y="1.9" width="1.6" height="1.4" fill="#1c6ee6"/><path d="M7.8 5.4 4 9.6h2.6l-1.4 3.4 3.8-4.4H6.3z" fill="#fff"/></svg><div class="a" style="left:189.7px;top:442.0px;font-size:8.1px;line-height:11px;color:#333;white-space:nowrap">东广场</div><div class="a" style="left:237.3px;top:442.0px;width:40px;text-align:right;font-size:8.1px;line-height:11px;color:#333;white-space:nowrap">环比</div><div class="a" style="left:170.8px;top:465.8px;font-size:9.3px;line-height:11px;color:#333;white-space:nowrap;transform:scaleX(0.87);transform-origin:0 0">5384.00KWh</div><div class="a" style="left:227.3px;top:465.8px;width:50px;text-align:right;font-size:9.3px;line-height:11px;color:#3aa676;white-space:nowrap;transform:scaleX(0.87);transform-origin:100% 0">-65.72%</div><div class="a" style="left:290.2px;top:426.0px;width:118px;height:71px;background:#efefef;border-radius:2.5px"></div><svg class="a" style="left:299.6px;top:440.0px" width="12.6" height="14.2" viewBox="0 0 12.6 14.2"><rect width="12.6" height="14.2" rx="1.2" fill="#1c6ee6"/><rect x="1" y="1" width="10.6" height="3.2" fill="#fff"/><rect x="2.2" y="1.9" width="1.6" height="1.4" fill="#1c6ee6"/><rect x="5.5" y="1.9" width="1.6" height="1.4" fill="#1c6ee6"/><rect x="8.8" y="1.9" width="1.6" height="1.4" fill="#1c6ee6"/><path d="M7.8 5.4 4 9.6h2.6l-1.4 3.4 3.8-4.4H6.3z" fill="#fff"/></svg><div class="a" style="left:314.6px;top:442.0px;font-size:8.1px;line-height:11px;color:#333;white-space:nowrap">西广场</div><div class="a" style="left:362.2px;top:442.0px;width:40px;text-align:right;font-size:8.1px;line-height:11px;color:#333;white-space:nowrap">环比</div><div class="a" style="left:295.7px;top:465.8px;font-size:9.3px;line-height:11px;color:#333;white-space:nowrap;transform:scaleX(0.87);transform-origin:0 0">7393.00KWh</div><div class="a" style="left:352.2px;top:465.8px;width:50px;text-align:right;font-size:9.3px;line-height:11px;color:#3aa676;white-space:nowrap;transform:scaleX(0.87);transform-origin:100% 0">-63.61%</div><div class="a" style="left:415.1px;top:426.0px;width:118px;height:71px;background:#efefef;border-radius:2.5px"></div><svg class="a" style="left:424.5px;top:440.0px" width="12.6" height="14.2" viewBox="0 0 12.6 14.2"><rect width="12.6" height="14.2" rx="1.2" fill="#1c6ee6"/><rect x="1" y="1" width="10.6" height="3.2" fill="#fff"/><rect x="2.2" y="1.9" width="1.6" height="1.4" fill="#1c6ee6"/><rect x="5.5" y="1.9" width="1.6" height="1.4" fill="#1c6ee6"/><rect x="8.8" y="1.9" width="1.6" height="1.4" fill="#1c6ee6"/><path d="M7.8 5.4 4 9.6h2.6l-1.4 3.4 3.8-4.4H6.3z" fill="#fff"/></svg><div class="a" style="left:439.5px;top:442.0px;font-size:8.1px;line-height:11px;color:#333;white-space:nowrap">北出租车场</div><div class="a" style="left:487.1px;top:442.0px;width:40px;text-align:right;font-size:8.1px;line-height:11px;color:#333;white-space:nowrap">环比</div><div class="a" style="left:420.6px;top:465.8px;font-size:9.3px;line-height:11px;color:#333;white-space:nowrap;transform:scaleX(0.87);transform-origin:0 0">0.00KWh</div><div class="a" style="left:477.1px;top:465.8px;width:50px;text-align:right;font-size:9.3px;line-height:11px;color:#333;white-space:nowrap;transform:scaleX(0.87);transform-origin:100% 0">-</div><div class="a" style="left:540.0px;top:426.0px;width:118px;height:71px;background:#efefef;border-radius:2.5px"></div><svg class="a" style="left:549.4px;top:440.0px" width="12.6" height="14.2" viewBox="0 0 12.6 14.2"><rect width="12.6" height="14.2" rx="1.2" fill="#1c6ee6"/><rect x="1" y="1" width="10.6" height="3.2" fill="#fff"/><rect x="2.2" y="1.9" width="1.6" height="1.4" fill="#1c6ee6"/><rect x="5.5" y="1.9" width="1.6" height="1.4" fill="#1c6ee6"/><rect x="8.8" y="1.9" width="1.6" height="1.4" fill="#1c6ee6"/><path d="M7.8 5.4 4 9.6h2.6l-1.4 3.4 3.8-4.4H6.3z" fill="#fff"/></svg><div class="a" style="left:564.4px;top:442.0px;font-size:8.1px;line-height:11px;color:#333;white-space:nowrap">南出租车场</div><div class="a" style="left:612.0px;top:442.0px;width:40px;text-align:right;font-size:8.1px;line-height:11px;color:#333;white-space:nowrap">环比</div><div class="a" style="left:545.5px;top:465.8px;font-size:9.3px;line-height:11px;color:#333;white-space:nowrap;transform:scaleX(0.87);transform-origin:0 0">0.00KWh</div><div class="a" style="left:602.0px;top:465.8px;width:50px;text-align:right;font-size:9.3px;line-height:11px;color:#333;white-space:nowrap;transform:scaleX(0.87);transform-origin:100% 0">-</div><div class="a ct" style="left:684px;top:425.7px;font-size:10px">能耗用量排名</div><div class="a" style="left:1064.3px;top:420.8px;width:113.0px;height:20px;border:1px solid #e4e7ed;border-radius:2.5px;background:#fff"></div><div class="a" style="left:1071.3px;top:426.8px;font-size:8.75px;line-height:11px;color:#555">电力</div><div class="a" style="left:1162.8px;top:427.1px;width:5px;height:5px;border-right:1px solid #aaa;border-bottom:1px solid #aaa;transform:rotate(45deg)"></div><div class="a" style="left:684px;top:446.3px;width:493px;height:28.2px;background:#f1f6fb"></div><div class="a" style="left:720.7px;top:447px;width:1px;height:27px;background:#e4ebf2"></div><div class="a" style="left:834.8px;top:447px;width:1px;height:27px;background:#e4ebf2"></div><div class="a" style="left:949.5px;top:447px;width:1px;height:27px;background:#e4ebf2"></div><div class="a" style="left:1063.3px;top:447px;width:1px;height:27px;background:#e4ebf2"></div><div class="a" style="left:691.5px;top:452.7px;font-size:10px;line-height:13px;color:#333;white-space:nowrap">序号</div><div class="a" style="left:728.7px;top:452.7px;font-size:10px;line-height:13px;color:#333;white-space:nowrap">表计名称</div><div class="a" style="left:843.2px;top:452.7px;font-size:10px;line-height:13px;color:#333;white-space:nowrap">用量</div><div class="a" style="left:957.1px;top:452.7px;font-size:10px;line-height:13px;color:#333;white-space:nowrap">空间位置</div><div class="a" style="left:1071.9px;top:452.7px;font-size:10px;line-height:13px;color:#333;white-space:nowrap">占比</div><div class="a" style="left:684px;top:502.0px;width:493px;height:1px;background:#ebeef3"></div><div class="a" style="left:692.5px;top:480.8px;font-size:10px;line-height:13px;color:#333;white-space:nowrap">1</div><div class="a" style="left:728.7px;top:480.8px;font-size:10px;line-height:13px;color:#333;white-space:nowrap">三层通信设备(主)_1...</div><div class="a" style="left:843.2px;top:480.8px;font-size:10px;line-height:13px;color:#333;white-space:nowrap">5608.00</div><div class="a" style="left:957.1px;top:480.8px;font-size:10px;line-height:13px;color:#333;white-space:nowrap">运营中心-负一层夹层</div><div class="a" style="left:1071.9px;top:480.8px;font-size:10px;line-height:13px;color:#333;white-space:nowrap">1.77%</div><div class="a" style="left:684px;top:530.1px;width:493px;height:1px;background:#ebeef3"></div><div class="a" style="left:692.5px;top:508.9px;font-size:10px;line-height:13px;color:#333;white-space:nowrap">2</div><div class="a" style="left:728.7px;top:508.9px;font-size:10px;line-height:13px;color:#333;white-space:nowrap">备用（项目部用电...</div><div class="a" style="left:843.2px;top:508.9px;font-size:10px;line-height:13px;color:#333;white-space:nowrap">5379.00</div><div class="a" style="left:957.1px;top:508.9px;font-size:10px;line-height:13px;color:#333;white-space:nowrap">运营中心-负一层夹层</div><div class="a" style="left:1071.9px;top:508.9px;font-size:10px;line-height:13px;color:#333;white-space:nowrap">1.70%</div><div class="a" style="left:684px;top:558.2px;width:493px;height:1px;background:#ebeef3"></div><div class="a" style="left:692.5px;top:537.0px;font-size:10px;line-height:13px;color:#333;white-space:nowrap">3</div><div class="a" style="left:728.7px;top:537.0px;font-size:10px;line-height:13px;color:#333;white-space:nowrap">备用（项目部用电...</div><div class="a" style="left:843.2px;top:537.0px;font-size:10px;line-height:13px;color:#333;white-space:nowrap">4516.00</div><div class="a" style="left:957.1px;top:537.0px;font-size:10px;line-height:13px;color:#333;white-space:nowrap">运营中心-负一层夹层</div><div class="a" style="left:1071.9px;top:537.0px;font-size:10px;line-height:13px;color:#333;white-space:nowrap">1.43%</div><div class="a" style="left:684px;top:586.3px;width:493px;height:1px;background:#ebeef3"></div><div class="a" style="left:692.5px;top:565.1px;font-size:10px;line-height:13px;color:#333;white-space:nowrap">4</div><div class="a" style="left:728.7px;top:565.1px;font-size:10px;line-height:13px;color:#333;white-space:nowrap">备用_2D607-3</div><div class="a" style="left:843.2px;top:565.1px;font-size:10px;line-height:13px;color:#333;white-space:nowrap">4094.00</div><div class="a" style="left:957.1px;top:565.1px;font-size:10px;line-height:13px;color:#333;white-space:nowrap">运营中心-负一层夹层</div><div class="a" style="left:1071.9px;top:565.1px;font-size:10px;line-height:13px;color:#333;white-space:nowrap">1.29%</div><div class="a ct" style="left:165px;top:523.7px;font-size:10px">能耗分区占比</div><div class="a" style="left:545.2px;top:519.5px;width:113.0px;height:20px;border:1px solid #e4e7ed;border-radius:2.5px;background:#fff"></div><div class="a" style="left:552.2px;top:525.5px;font-size:8.75px;line-height:11px;color:#555">电力</div><div class="a" style="left:643.7px;top:525.8px;width:5px;height:5px;border-right:1px solid #aaa;border-bottom:1px solid #aaa;transform:rotate(45deg)"></div><div class="a" style="left:165px;top:547px;font-size:5.4px;line-height:7px;color:#999">40000</div>
<div class="a" style="left:165px;top:578px;font-size:5.4px;line-height:7px;color:#999">30000</div>
<div class="a" style="left:184.4px;top:550.5px;width:473px;height:1px;background:#f0f0f0"></div>
<div class="a" style="left:184.4px;top:581.5px;width:473px;height:1px;background:#f0f0f0"></div>
<div class="a" style="left:207.3px;top:568px;width:12.5px;height:26px;background:#1677e6"></div>
<div class="a" style="left:1187px;top:41px;width:13px;height:552.5px;background:#f5f6f8"></div>
<div class="a" style="left:1197px;top:67px;width:3px;height:324.5px;background:#d3d8e0"></div>
<div class="a" style="left:1195.5px;top:230.5px;width:5px;height:37px;background:#fff;border-radius:2.5px 0 0 2.5px"></div>
<div class="a" style="left:1196.3px;top:231.3px;width:4px;height:35.5px;background:#2bcb6c;border-radius:2px 0 0 2px"></div>
<div class="a" style="left:1196.3px;top:231.3px;width:4px;height:7px;background:#8a8f96;border-radius:2px 0 0 0"></div>
<div class="a" style="left:956.5px;top:545.5px;font-size:32px;line-height:46px;letter-spacing:8.6px;color:transparent;-webkit-text-stroke:0.6px #6f6f6f;white-space:nowrap">广州云物智能</div>
</body></html>
